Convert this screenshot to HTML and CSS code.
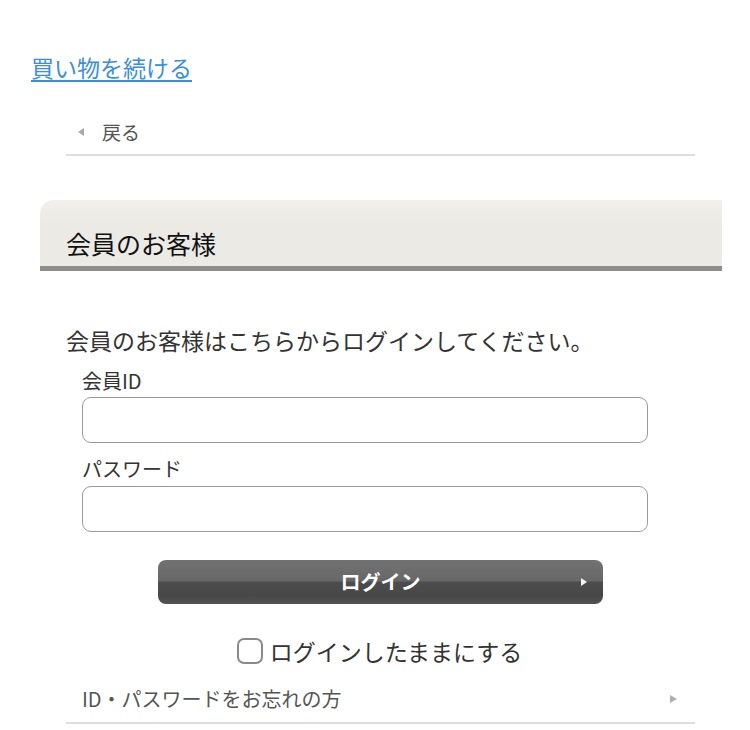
FILE: index.html
```html
<!DOCTYPE html>
<html lang="ja">
<head>
<meta charset="utf-8">
<title>ログイン</title>
<link rel="stylesheet" href="styles.css">
</head>
<body>
<div class="top">
  <a class="continue-link" href="#">買い物を続ける</a>
</div>
<div class="back-row">
  <span class="tri-left"></span>
  <span class="back-text">戻る</span>
</div>
<div class="panel-head">
  <h2 class="panel-title">会員のお客様</h2>
</div>
<div class="content">
  <p class="lead">会員のお客様はこちらからログインしてください。</p>
  <form class="login-form">
    <label class="field-label">会員ID</label>
    <input class="field-input" type="text">
    <label class="field-label field-label-2">パスワード</label>
    <input class="field-input field-input-2" type="password">
  </form>
  <div class="button-wrap">
    <button class="login-btn" type="button">ログイン<span class="tri-right"></span></button>
  </div>
  <div class="keep-row">
    <span class="checkbox"></span>
    <span class="keep-text">ログインしたままにする</span>
  </div>
  <div class="forgot-row">
    <span class="forgot-text">ID・パスワードをお忘れの方</span>
    <span class="tri-right-gray"></span>
  </div>
</div>
</body>
</html>
```
FILE: styles.css
```css
html, body {
  margin: 0;
  padding: 0;
  background: #fff;
}
body {
  font-family: "Noto Sans CJK JP", "Noto Sans", sans-serif;
  color: #222;
  width: 750px;
}
.top {
  padding: 52px 0 0 31px;
  height: 30px;
}
.continue-link {
  font-size: 23px;
  line-height: 30px;
  color: #3b8fd8;
  text-decoration: underline;
  text-underline-offset: 3px;
  text-decoration-thickness: 1.5px;
}
.back-row {
  margin: 28px 55px 0 66px;
  height: 44px;
  border-bottom: 2px solid #dedede;
  display: flex;
  align-items: center;
}
.tri-left {
  width: 0;
  height: 0;
  border-top: 4px solid transparent;
  border-bottom: 4px solid transparent;
  border-right: 6px solid #a8a8a8;
  margin-left: 12px;
}
.back-text {
  margin-left: 18px;
  font-size: 19px;
  line-height: 28px;
  color: #555;
}
.panel-head {
  margin: 44px 28px 0 40px;
  height: 66px;
  background: linear-gradient(#f1f0eb, #ebeae5 30%, #ebeae5);
  border-top-left-radius: 14px;
  border-bottom: 5px solid #8e8e8e;
  box-sizing: content-box;
}
.panel-title {
  margin: 0;
  padding: 29px 0 0 26px;
  font-size: 25px;
  line-height: 28px;
  font-weight: normal;
  color: #111;
}
.content {
  margin: 0 55px 0 66px;
}
.lead {
  margin: 53px 0 0 0;
  font-size: 23px;
  line-height: 32px;
  color: #333;
  white-space: nowrap;
}
.login-form {
  margin: 11px 0 0 16px;
  display: flex;
  flex-direction: column;
  width: 566px;
}
.field-label {
  font-size: 20px;
  line-height: 28px;
  color: #333;
}
.field-label-2 {
  margin-top: 12px;
}
.field-input {
  margin: 2px 0 0 0;
  height: 46px;
  box-sizing: border-box;
  border: 1.5px solid #9a9a9a;
  border-radius: 9px;
  background: #fff;
  padding: 0 10px;
  font-size: 18px;
}
.field-input-2 {
  margin-top: 3px;
}
.button-wrap {
  margin-top: 28px;
  display: flex;
  justify-content: center;
}
.login-btn {
  position: relative;
  width: 445px;
  height: 44px;
  border: none;
  border-radius: 8px;
  background: linear-gradient(#727272 0%, #676767 48%, #4d4d4d 50%, #474747 80%, #525252 100%);
  color: #fff;
  font-family: "Noto Sans CJK JP", sans-serif;
  font-size: 20px;
  font-weight: bold;
  line-height: 44px;
  padding: 0;
}
.tri-right {
  position: absolute;
  right: 16px;
  top: 18px;
  width: 0;
  height: 0;
  border-top: 4px solid transparent;
  border-bottom: 4px solid transparent;
  border-left: 6px solid #f4f4f4;
}
.keep-row {
  margin-top: 32px;
  height: 30px;
  display: flex;
  justify-content: center;
  align-items: center;
  padding-right: 2px;
}
.checkbox {
  width: 26px;
  height: 26px;
  box-sizing: border-box;
  border: 2.5px solid #8a8a8a;
  border-radius: 7px;
  background: #fff;
}
.keep-text {
  margin-left: 7px;
  font-size: 23px;
  line-height: 30px;
  color: #333;
}
.forgot-row {
  margin-top: 10px;
  height: 46px;
  border-bottom: 2px solid #dedede;
  display: flex;
  align-items: center;
  justify-content: space-between;
  padding: 0 18px 0 16px;
}
.forgot-text {
  font-size: 20px;
  line-height: 28px;
  color: #555;
}
.tri-right-gray {
  width: 0;
  height: 0;
  border-top: 4px solid transparent;
  border-bottom: 4px solid transparent;
  border-left: 7px solid #b0b0b0;
}
```
